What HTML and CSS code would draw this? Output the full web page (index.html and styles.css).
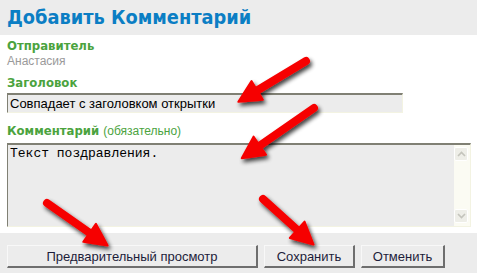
FILE: index.html
```html
<!DOCTYPE html>
<html lang="ru">
<head>
  <meta charset="UTF-8" />
  <title>Добавить Комментарий</title>
  <link rel="stylesheet" href="styles.css">
</head>
<body>
  <div class="page">
    <h1>Добавить Комментарий</h1>

    <div class="section">
      <div class="label first">Отправитель</div>
      <div class="sender">Анастасия</div>

      <div class="label">Заголовок</div>
      <div class="field">Совпадает с заголовком открытки</div>

      <div class="label comment">Комментарий <span class="hint">(обязательно)</span></div>
      <div class="area">
        <div class="area-text">Текст поздравления.</div>
        <div class="scroll">
          <div class="scroll-btn">
            <svg width="9" height="6" viewBox="0 0 9 6"><path d="M1 5 L4.5 1.5 L8 5" fill="none" stroke="#c4c4bc" stroke-width="1.6"/></svg>
          </div>
          <div class="scroll-btn">
            <svg width="9" height="6" viewBox="0 0 9 6"><path d="M1 1 L4.5 4.5 L8 1" fill="none" stroke="#c4c4bc" stroke-width="1.6"/></svg>
          </div>
        </div>
      </div>
    </div>

    <div class="buttons">
      <button class="btn wide">Предварительный просмотр</button>
      <button class="btn save">Сохранить</button>
      <button class="btn cancel">Отменить</button>
    </div>

    <!-- red pointer arrows drawn over the form -->
    <svg class="arrows" width="477" height="273" viewBox="0 0 477 273">
      <defs>
        <filter id="shade" x="-30%" y="-30%" width="160%" height="160%">
          <feGaussianBlur in="SourceAlpha" stdDeviation="2.2"/>
          <feOffset dx="2" dy="3" result="b"/>
          <feComponentTransfer><feFuncA type="linear" slope="0.75"/></feComponentTransfer>
          <feMerge><feMergeNode/><feMergeNode in="SourceGraphic"/></feMerge>
        </filter>
      </defs>
      <g filter="url(#shade)">
        <g transform="translate(306 61) rotate(148.9)">
          <line x1="0" y1="0" x2="60" y2="0" />
          <polygon points="79,0 57,-11 57,11" />
        </g>
        <g transform="translate(314 108) rotate(145.2)">
          <line x1="0" y1="0" x2="68" y2="0" />
          <polygon points="88,0 66,-11 66,11" />
        </g>
        <g transform="translate(47 203) rotate(35)">
          <line x1="0" y1="0" x2="54" y2="0" />
          <polygon points="74,0 52,-11 52,11" />
        </g>
        <g transform="translate(263 199) rotate(42)">
          <line x1="0" y1="0" x2="48" y2="0" />
          <polygon points="68,0 46,-11 46,11" />
        </g>
      </g>
    </svg>
  </div>
</body>
</html>
```

FILE: styles.css
```css
body {
  margin: 0;
  background-color: #fff;
  font-family: "DejaVu Sans Condensed", "DejaVu Sans", Verdana, sans-serif;
}

.page {
  position: relative;
  width: 477px;
  height: 273px;
  overflow: hidden;
}

h1 {
  margin: 0;
  padding: 0 7px;
  height: 35px;
  line-height: 35px;
  background-color: #ececec;
  color: #0b7ec4;
  font-size: 19.8px;
  font-weight: bold;
  white-space: nowrap;
}

.section {
  padding: 0 6px 0 7px;
}

.label {
  margin-top: 7px;
  line-height: 16px;
  font-size: 13px;
  font-weight: bold;
  color: #4ba33e;
}

.label.first {
  margin-top: 3px;
}

.label.comment {
  margin-top: 10px;
}

.hint {
  font-family: "Liberation Sans", Arial, sans-serif;
  font-size: 12px;
  font-weight: normal;
}

.sender {
  line-height: 14px;
  font-family: "Liberation Sans", Arial, sans-serif;
  font-size: 12px;
  color: #9a9a9a;
}

.field {
  margin-top: 2px;
  width: 392px;
  height: 17px;
  padding-left: 2px;
  box-sizing: content-box;
  background-color: #ececec;
  border-top: 2px solid #808074;
  border-left: 1px solid #808074;
  border-right: 1px solid #f3f3e2;
  border-bottom: 1px solid #f3f3e2;
  font-family: "Liberation Sans", Arial, sans-serif;
  font-size: 13px;
  line-height: 18px;
  color: #000;
}

.area {
  display: flex;
  margin-top: 4px;
  height: 81px;
  background-color: #ececec;
  border-top: 2px solid #808074;
  border-left: 1px solid #808074;
  border-right: 1px solid #f3f3e2;
  border-bottom: 1px solid #f3f3e2;
}

.area-text {
  flex: 1;
  padding: 1px 2px;
  font-family: "Liberation Mono", "Courier New", monospace;
  font-size: 13px;
  line-height: 16px;
  color: #000;
}

.scroll {
  display: flex;
  flex-direction: column;
  justify-content: space-between;
  width: 15px;
  padding: 2px 1px 3px 0;
  background-color: #fbfbf3;
}

.scroll-btn {
  display: flex;
  align-items: center;
  justify-content: center;
  width: 14px;
  height: 14px;
  box-sizing: border-box;
  background-color: #eeeee8;
  border: 1px solid #fff;
  border-radius: 2px;
}

.buttons {
  display: flex;
  gap: 6px;
  margin-top: 6px;
  height: 40px;
  padding: 12px 7px 0;
  box-sizing: border-box;
  background-color: #ececec;
}

.btn {
  height: 23px;
  padding: 0;
  background-color: #ececec;
  border-top: 1px solid #f8f8f8;
  border-left: 1px solid #f8f8f8;
  border-right: 2px solid #6e6e6e;
  border-bottom: 2px solid #6e6e6e;
  font-family: "Liberation Sans", Arial, sans-serif;
  font-size: 13px;
  color: #1c1c3a;
}

.btn.wide {
  width: 251px;
}

.btn.save {
  width: 91px;
}

.btn.cancel {
  width: 84px;
}

.arrows {
  position: absolute;
  top: 0;
  left: 0;
  pointer-events: none;
}

.arrows line {
  stroke: #f60000;
  stroke-width: 8;
  stroke-linecap: round;
}

.arrows polygon {
  fill: #f60000;
  stroke: #f60000;
  stroke-width: 2;
  stroke-linejoin: round;
}
```
